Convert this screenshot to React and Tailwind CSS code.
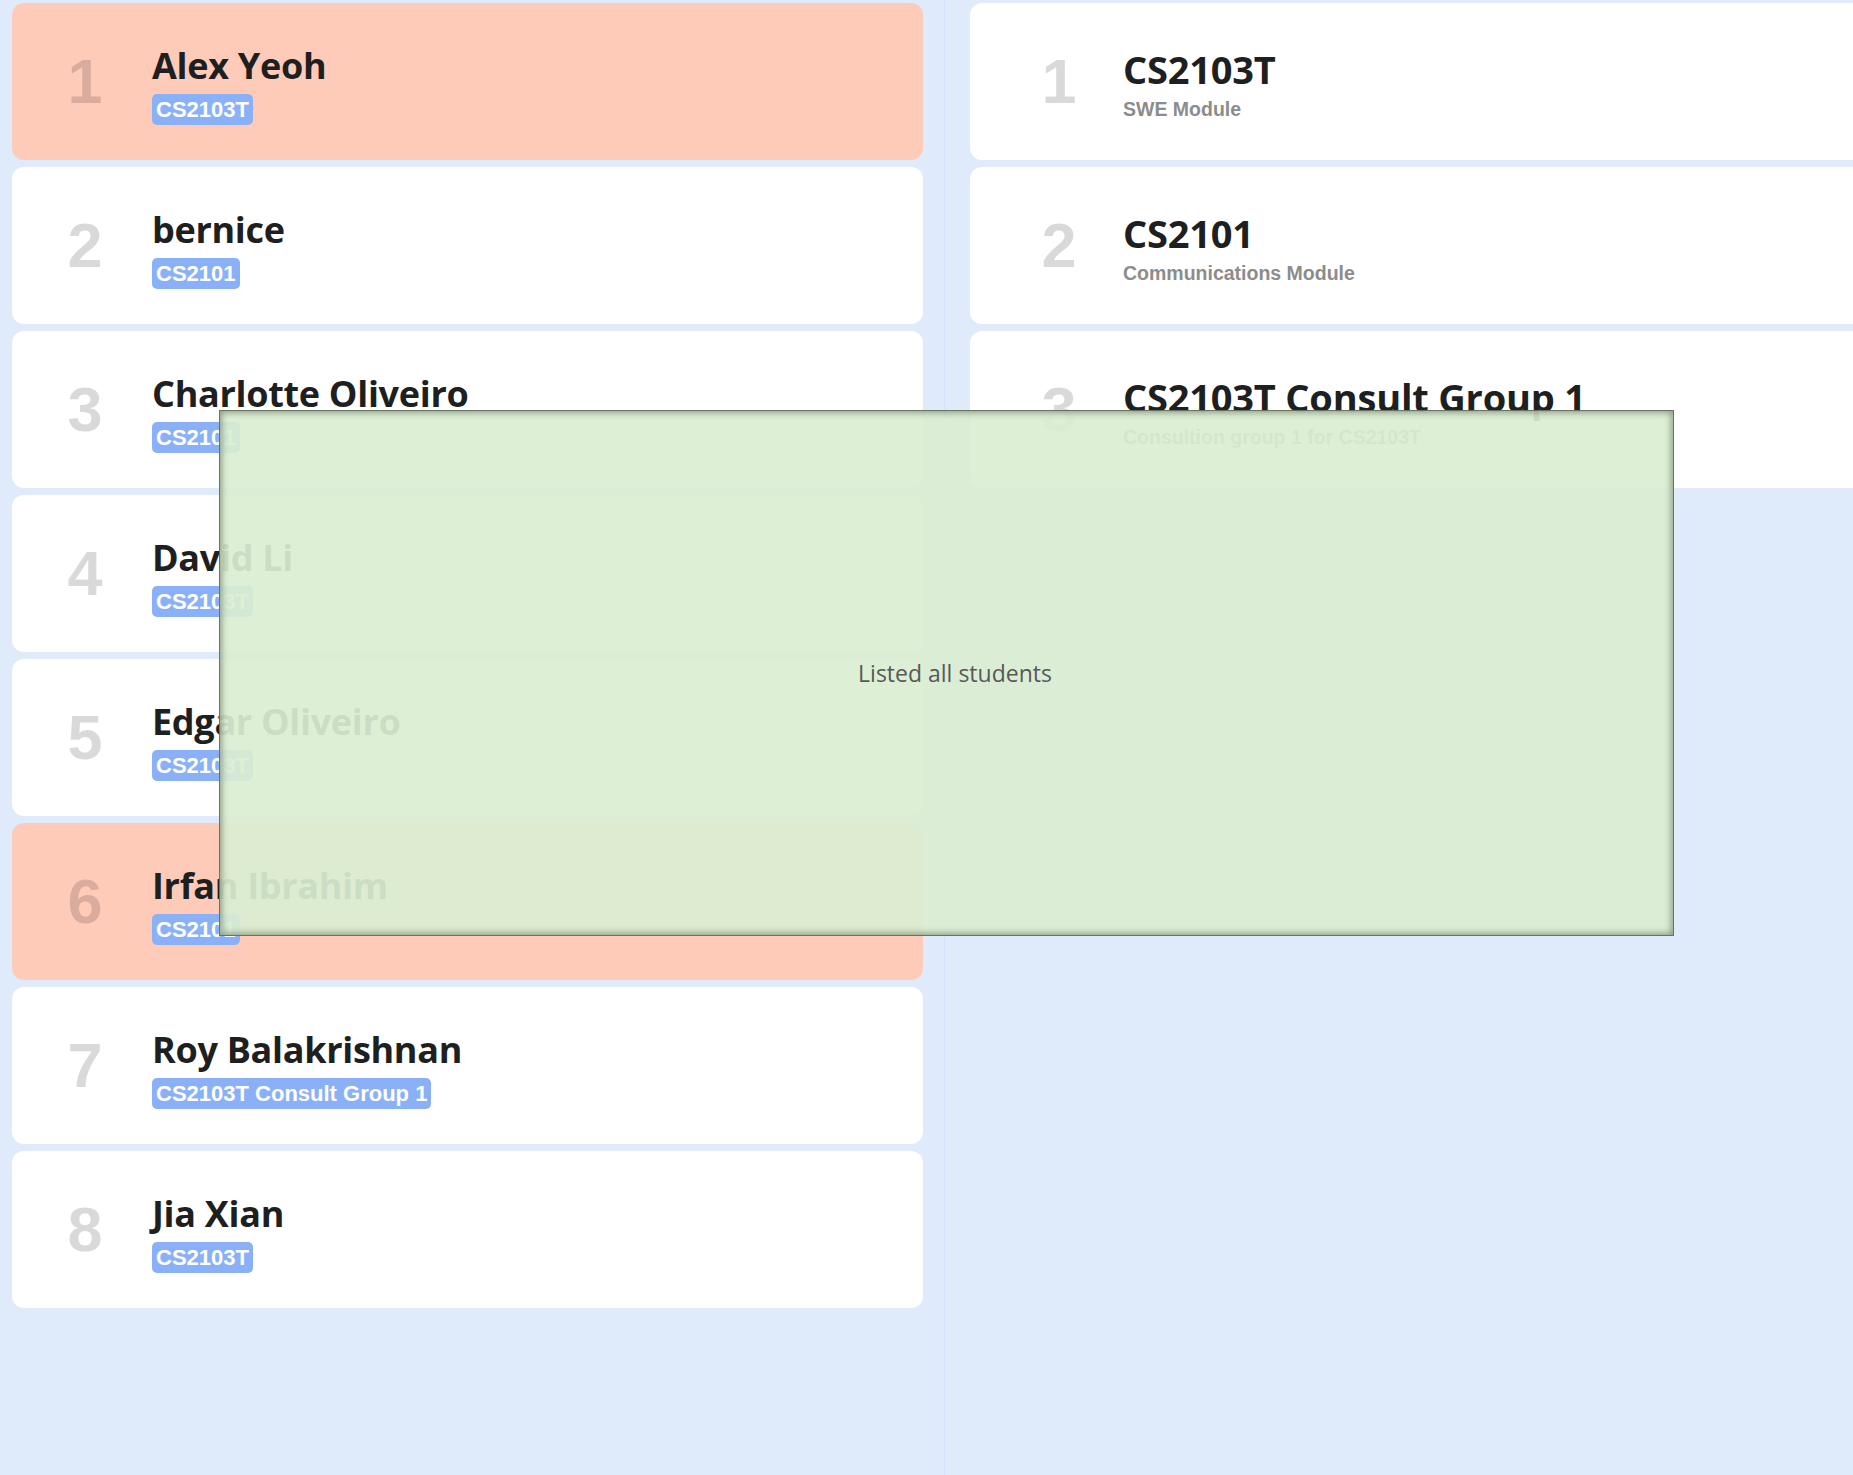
const students = [
  { name: 'Alex Yeoh', tag: 'CS2103T', hit: true },
  { name: 'bernice', tag: 'CS2101' },
  { name: 'Charlotte Oliveiro', tag: 'CS2101' },
  { name: 'David Li', tag: 'CS2103T' },
  { name: 'Edgar Oliveiro', tag: 'CS2103T' },
  { name: 'Irfan Ibrahim', tag: 'CS2101', hit: true },
  { name: 'Roy Balakrishnan', tag: 'CS2103T Consult Group 1' },
  { name: 'Jia Xian', tag: 'CS2103T' },
]

const groups = [
  { title: 'CS2103T', desc: 'SWE Module' },
  { title: 'CS2101', desc: 'Communications Module' },
  { title: 'CS2103T Consult Group 1', desc: 'Consultion group 1 for CS2103T' },
]

const arial = { fontFamily: '"Liberation Sans", Arial, sans-serif' }

function Index({ n }) {
  return (
    <div
      className="w-[80px] shrink-0 text-center text-[63px] font-bold leading-none text-black/15"
      style={arial}
    >
      {n}
    </div>
  )
}

function StudentCard({ s, i }) {
  return (
    <div
      className={`flex h-[157px] items-center rounded-[12px] ${
        s.hit ? 'bg-[#ffcbb9]' : 'bg-white'
      }`}
    >
      <div className="ml-[33px]">
        <Index n={i + 1} />
      </div>
      <div className="ml-[27px] mt-[8px] flex flex-col items-start">
        <div className="font-['Open_Sans',sans-serif] text-[36px] font-bold leading-[40px] tracking-[-0.3px] text-[#1d201f]">
          {s.name}
        </div>
        <div
          className="mt-[8px] h-[31px] rounded-[5px] bg-[#8ab1f7] px-[4px] text-[22px] font-bold leading-[31px] text-white"
          style={arial}
        >
          {s.tag}
        </div>
      </div>
    </div>
  )
}

function GroupCard({ g, i }) {
  return (
    <div className="flex h-[157px] w-[1000px] items-center rounded-[12px] bg-white">
      <div className="ml-[49px]">
        <Index n={i + 1} />
      </div>
      <div className="ml-[24px] mt-[4px] flex flex-col items-start">
        <div className="font-['Open_Sans',sans-serif] text-[38px] font-bold leading-[44px] tracking-[-0.2px] text-[#1d201f]">
          {g.title}
        </div>
        <div
          className="mt-[7px] text-[19.5px] font-bold leading-[22px] text-[#8c8c8c]"
          style={arial}
        >
          {g.desc}
        </div>
      </div>
    </div>
  )
}

export default function App() {
  return (
    <div className="relative flex h-[1475px] w-[1853px] overflow-hidden bg-[#dfeafb]">
      <div className="flex w-[945px] shrink-0 flex-col gap-[7px] border-r border-[#d5e1fa] pl-[12px] pr-[21px] pt-[3px]">
        {students.map((s, i) => (
          <StudentCard key={s.name} s={s} i={i} />
        ))}
      </div>

      <div className="flex flex-1 flex-col gap-[7px] overflow-hidden pl-[25px] pt-[3px]">
        {groups.map((g, i) => (
          <GroupCard key={g.title} g={g} i={i} />
        ))}
      </div>

      {/* result popup */}
      <div className="absolute left-[219px] top-[410px] flex h-[526px] w-[1455px] items-center justify-center border border-[#69745f] bg-[#daeed1]/92 pl-[17px] shadow-[inset_0_0_6px_2px_rgba(80,92,72,0.55)]">
        <span className="font-['Open_Sans',sans-serif] text-[23px] leading-[30px] text-[#585858]">
          Listed all students
        </span>
      </div>
    </div>
  )
}
